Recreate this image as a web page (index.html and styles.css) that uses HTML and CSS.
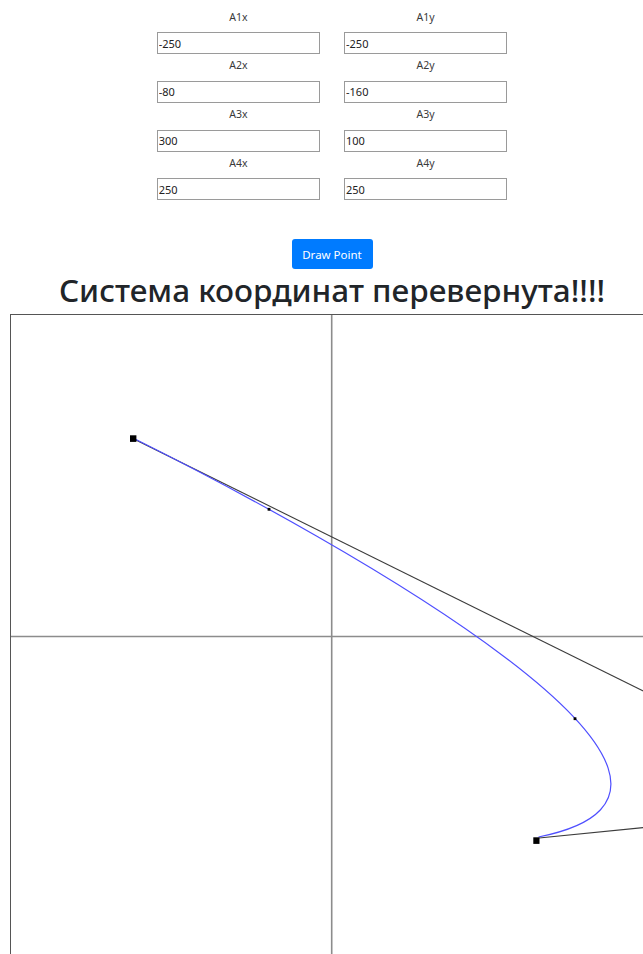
FILE: index.html
```html
<!DOCTYPE html>
<html lang="ru">
<head>
<meta charset="utf-8">
<title>Bezier</title>
<link rel="stylesheet" href="styles.css">
</head>
<body>
<div class="page">
  <form class="coords">
    <div class="field"><label class="field-label">A1x</label><input class="field-input" type="text" value="-250"></div>
    <div class="field"><label class="field-label">A1y</label><input class="field-input" type="text" value="-250"></div>
    <div class="field"><label class="field-label">A2x</label><input class="field-input" type="text" value="-80"></div>
    <div class="field"><label class="field-label">A2y</label><input class="field-input" type="text" value="-160"></div>
    <div class="field"><label class="field-label">A3x</label><input class="field-input" type="text" value="300"></div>
    <div class="field"><label class="field-label">A3y</label><input class="field-input" type="text" value="100"></div>
    <div class="field"><label class="field-label">A4x</label><input class="field-input" type="text" value="250"></div>
    <div class="field"><label class="field-label">A4y</label><input class="field-input" type="text" value="250"></div>
  </form>
  <button class="btn-draw" type="button">Draw Point</button>
  <h1 class="title">Система координат перевернута!!!!</h1>
  <svg class="plane" viewBox="0 0 642 642" width="642" height="642">
    <!-- axes -->
    <line class="axis" x1="320.7" y1="0" x2="320.7" y2="642"/>
    <line class="axis" x1="0" y1="321.5" x2="642" y2="321.5"/>
    <!-- tangent lines -->
    <line class="tangent" x1="122.3" y1="123.7" x2="800" y2="459"/>
    <line class="tangent" x1="528" y1="523" x2="800" y2="496"/>
    <!-- curve -->
    <path class="curve" d="M123 123.5 C323 223.5 775.5 472.4 527.5 522"/>
    <!-- points -->
    <rect class="pt" x="119" y="120.3" width="6.4" height="6.6"/>
    <rect class="pt" x="522.3" y="522.3" width="6.2" height="6.6"/>
    <rect class="pt" x="256.6" y="192.9" width="2.8" height="2.8"/>
    <rect class="pt" x="562.6" y="402.3" width="2.8" height="2.8"/>
  </svg>
</div>
</body>
</html>
```

FILE: styles.css
```css
html, body {
  margin: 0;
  padding: 0;
  background: #fff;
  overflow: hidden;
}

body {
  font-family: "Noto Sans", "Open Sans", sans-serif;
  color: #212529;
}

.page {
  width: 644px;
  margin-left: 10px;
  display: flex;
  flex-direction: column;
  align-items: center;
}

.coords {
  display: grid;
  grid-template-columns: 163.3px 163.3px;
  column-gap: 24px;
  row-gap: 3.07px;
  padding-top: 8.7px;
  margin: 0;
}

.field {
  display: flex;
  flex-direction: column;
}

.field-label {
  display: block;
  height: 16px;
  line-height: 16px;
  font-size: 10.5px;
  text-align: center;
  color: #3a3a3a;
}

.field-input {
  box-sizing: border-box;
  margin: 7.6px 0 0;
  width: 163.3px;
  height: 22px;
  padding: 0 1px;
  border: 1px solid #9a9a9a;
  border-radius: 0;
  font-family: "Noto Sans", "Open Sans", sans-serif;
  font-size: 11px;
  color: #222;
  background: #fff;
  outline: none;
}

.btn-draw {
  box-sizing: border-box;
  margin-top: 39px;
  width: 81px;
  height: 30px;
  padding: 0;
  border: none;
  border-radius: 3px;
  background: #007bff;
  color: #fff;
  font-family: "Noto Sans", "Open Sans", sans-serif;
  font-size: 11.5px;
}

.title {
  margin: 2.7px 0 0;
  font-size: 31.5px;
  line-height: 36px;
  font-weight: 500;
  color: #212529;
  white-space: nowrap;
}

.plane {
  display: block;
  flex: none;
  margin-top: 6px;
  border: 1px solid #555;
  background: #fff;
}

.axis {
  stroke: #8c8c8c;
  stroke-width: 1.6;
}

.tangent {
  stroke: #3c3c3c;
  stroke-width: 1.1;
}

.curve {
  fill: none;
  stroke: #4f4fff;
  stroke-width: 1.2;
}

.pt {
  fill: #000;
}
```
